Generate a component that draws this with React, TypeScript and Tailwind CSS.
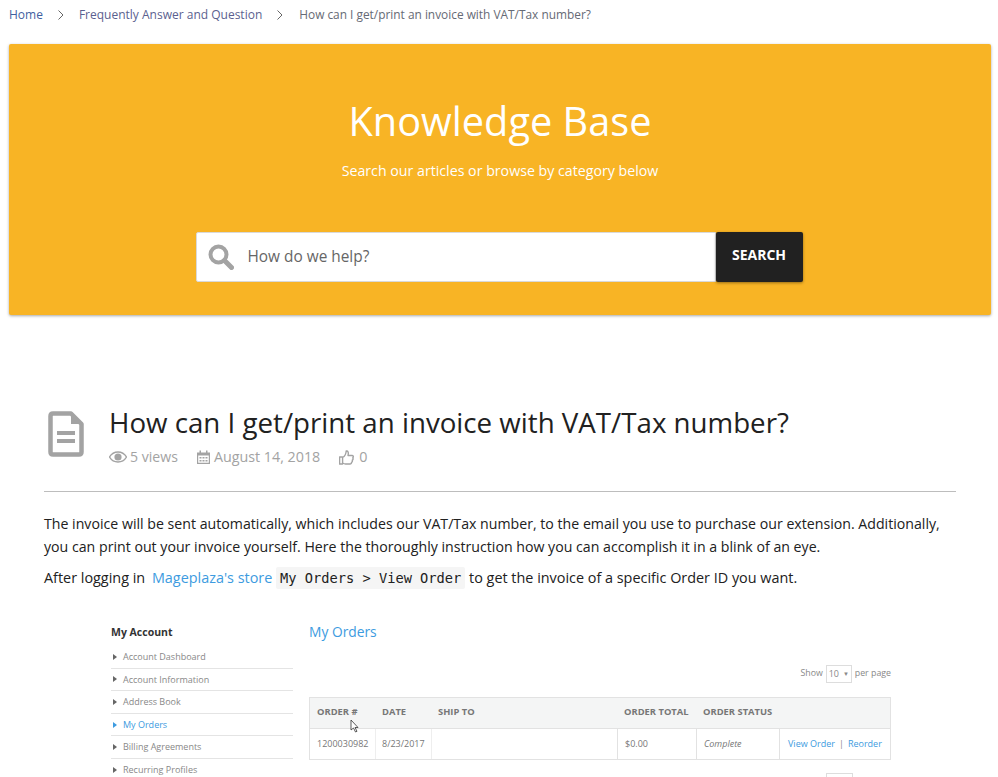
import React from "react";

const Caret = ({ color = "#666" }: { color?: string }) => (
  <svg width="4" height="6" viewBox="0 0 4 6" className="shrink-0"><path d="M0 0L4 3L0 6Z" fill={color} /></svg>
);

const side = ["Account Dashboard", "Account Information", "Address Book", "My Orders", "Billing Agreements", "Recurring Profiles"];

export default function App() {
  return (
    <div className="h-[777px] w-[998px] overflow-hidden bg-white font-['Open_Sans',sans-serif]">
      <nav className="flex h-[44px] items-start px-[9px] pt-[6px] text-[12px] leading-[17px] text-[#5b5f8f]">
        <span className="text-[#3f5f9f]">Home</span>
        <svg width="6" height="10" viewBox="0 0 6 10" className="ml-[15px] mr-[15px] mt-[4px]" fill="none" stroke="#666" strokeWidth="1"><path d="M0.5 0.5L5 5L0.5 9.5" /></svg>
        <span>Frequently Answer and Question</span>
        <svg width="6" height="10" viewBox="0 0 6 10" className="ml-[15px] mr-[16px] mt-[4px]" fill="none" stroke="#666" strokeWidth="1"><path d="M0.5 0.5L5 5L0.5 9.5" /></svg>
        <span className="text-[11.88px] text-[#666a75]">How can I get/print an invoice with VAT/Tax number?</span>
      </nav>

      <section className="ml-[9px] mr-[7px] flex h-[271px] flex-col items-center rounded-[2px] bg-[#f8b425] pt-[49px] shadow-[0_1px_3px_rgba(0,0,0,0.35)]">
        <h1 className="text-[39.7px] leading-[56px] text-white">Knowledge Base</h1>
        <p className="mt-[12px] text-[14.2px] leading-[20px] text-white">Search our articles or browse by category below</p>
        <div className="mr-[2px] mt-[51px] flex h-[50px] w-[607px]">
          <div className="flex flex-1 items-center rounded-l-[2px] border border-[#d9d9d9] bg-white">
            <svg width="26" height="26" viewBox="0 0 26 26" className="ml-[11px]" fill="none" stroke="#a3a3a3">
              <circle cx="10.5" cy="10.5" r="8" strokeWidth="4" />
              <path d="M16.5 16.5L23.5 23.5" strokeWidth="5" strokeLinecap="round" />
            </svg>
            <span className="ml-[14px] text-[15.4px] text-[#666]">How do we help?</span>
          </div>
          <div className="flex w-[87px] items-center justify-center rounded-[2px] bg-[#212121] pb-[5px] text-[14px] font-bold text-white shadow-[0_1px_3px_rgba(0,0,0,0.4)]">SEARCH</div>
        </div>
      </section>

      <article className="ml-[44px] mr-[42px] mt-[86px]">
        <header className="flex h-[91px] border-b border-[#bdbdbd]">
          <svg width="36" height="46" viewBox="0 0 36 46" className="ml-[4px] mt-[10px] shrink-0">
            <path d="M5 2.5H23L33.5 13V41C33.5 42.5 32.5 43.5 31 43.5H5C3.5 43.5 2.5 42.5 2.5 41V5C2.5 3.5 3.5 2.5 5 2.5Z" fill="none" stroke="#a3a3a3" strokeWidth="4.5" strokeLinejoin="round" />
            <path d="M23 2V13H34Z" fill="#a3a3a3" />
            <rect x="9" y="20" width="18" height="4" fill="#a3a3a3" />
            <rect x="9" y="28" width="18" height="4" fill="#a3a3a3" />
          </svg>
          <div className="ml-[25px] pt-[2px]">
            <h2 className="text-[27.7px] leading-[38px] text-[#212121]">How can I get/print an invoice with VAT/Tax number?</h2>
            <div className="mt-[6px] flex items-center text-[14.3px] leading-[20px] text-[#a3a3a3]">
              <svg width="18" height="12" viewBox="0 0 18 12" className="mr-[3px]">
                <path d="M9 1C5 1 2 3.5 0.5 6C2 8.5 5 11 9 11C13 11 16 8.5 17.5 6C16 3.5 13 1 9 1Z" fill="none" stroke="#a3a3a3" strokeWidth="1.4" />
                <circle cx="9" cy="6" r="3.6" fill="#a3a3a3" />
              </svg>
              <span className="text-[14.1px]">5 views</span>
              <svg width="13" height="14" viewBox="0 0 13 14" className="ml-[19px] mr-[4px]" fill="#a3a3a3">
                <path d="M0 2.5H13V14H0ZM1.2 5.5V12.8H11.8V5.5Z" fillRule="evenodd" />
                <rect x="2.5" y="0.5" width="1.5" height="3" /><rect x="9" y="0.5" width="1.5" height="3" />
                <rect x="2.5" y="7" width="2" height="1.5" /><rect x="5.5" y="7" width="2" height="1.5" /><rect x="8.5" y="7" width="2" height="1.5" />
                <rect x="2.5" y="10" width="2" height="1.5" /><rect x="5.5" y="10" width="2" height="1.5" /><rect x="8.5" y="10" width="2" height="1.5" />
              </svg>
              <span>August 14, 2018</span>
              <svg width="15" height="15" viewBox="0 0 15 15" className="ml-[19px] mr-[5px]" fill="none" stroke="#a3a3a3" strokeWidth="1.4">
                <path d="M0.6 7H3.6V14H0.6ZM3.6 7.5C5.5 6.5 7 4 7.2 1C9 0.5 9.8 2.5 9 5.5H13C14.5 5.5 14.6 7.2 13.8 7.8C14.4 8.8 14 9.8 13.3 10.2C13.6 11.2 13.2 12 12.5 12.3C12.6 13.4 12 14 11 14H6.5C5.5 14 4.5 13.5 3.6 13" strokeLinejoin="round" />
              </svg>
              <span>0</span>
            </div>
          </div>
        </header>

        <p className="mt-[20px] text-[14.16px] leading-[23px] text-[#212121]">
          The invoice will be sent automatically, which includes our VAT/Tax number, to the email you use to purchase our extension. Additionally, you can print out your invoice yourself. Here the thoroughly instruction how you can accomplish it in a blink of an eye.
        </p>
        <p className="mt-[8px] text-[14.4px] leading-[23px] text-[#212121]">
          After logging in <span className="ml-[3px] text-[#3d9be0]">Mageplaza's store</span>{" "}
          <code className="rounded-[2px] bg-[#f5f5f5] px-[4px] py-[3px] font-['DejaVu_Sans_Mono',monospace] text-[13.7px]">My Orders &gt; View Order</code>{" "}
          to get the invoice of a specific Order ID you want.
        </p>

        <div className="ml-[67px] mt-[35px] flex w-[780px] text-[#777]">
          <aside className="w-[182px] shrink-0">
            <div className="text-[10.5px] font-bold leading-[14px] text-[#333]">My Account</div>
            <ul className="mt-[7px]">
              {side.map((s) => (
                <li key={s} className="flex h-[22.6px] items-center gap-[6px] border-b border-[#e4e4e4] pl-[2px] text-[9px]">
                  <Caret color={s === "My Orders" ? "#3d9be0" : "#666"} />
                  <span className={s === "My Orders" ? "text-[#3d9be0]" : "text-[#888]"}>{s}</span>
                </li>
              ))}
            </ul>
          </aside>
          <div className="ml-[16px] flex-1">
            <div className="text-[13.8px] leading-[14px] text-[#3d9be0]">My Orders</div>
            <div className="mt-[26px] flex h-[18px] w-[582px] items-center justify-end text-[8.8px] text-[#888]">
              Show
              <span className="mx-[3px] flex h-[18px] w-[26px] items-center justify-center gap-[4px] border border-[#ddd] text-[9px]">10 <span className="text-[6px]">▼</span></span>
              per page
            </div>
            <div className="relative mt-[14px] w-[582px] border border-[#e2e2e2]">
              <div className="flex h-[30px] items-center bg-[#f4f5f5] pb-[1px] text-[9.4px] font-bold text-[#777]">
                <span className="w-[66px] pl-[7px]">ORDER #</span>
                <span className="w-[62px] pl-[6px]">DATE</span>
                <span className="w-[186px]">SHIP TO</span>
                <span className="w-[79px]">ORDER TOTAL</span>
                <span>ORDER STATUS</span>
              </div>
              <div className="flex h-[31px] items-center border-t border-[#e2e2e2] text-[9px] text-[#777]">
                <span className="flex h-full w-[66px] items-center border-r border-[#eee] pl-[7px]">1200030982</span>
                <span className="flex h-full w-[56px] items-center border-r border-[#eee] pl-[6px]">8/23/2017</span>
                <span className="h-full w-[186px] border-r border-[#e2e2e2]"></span>
                <span className="flex h-full w-[79px] items-center border-r border-[#e2e2e2] pl-[7px]">$0.00</span>
                <span className="flex h-full w-[83px] items-center border-r border-[#e2e2e2] pl-[7px] italic">Complete</span>
                <span className="flex items-center pl-[8px] text-[#3d9be0]">View Order<span className="mx-[4px] text-[#888]">|</span>Reorder</span>
              </div>
              <svg width="9" height="14" viewBox="0 0 9 14" className="absolute left-[40px] top-[21px]">
                <path d="M1 1V11L3.5 9L5.5 13L7 12.3L5 8.5H8Z" fill="#fff" stroke="#333" strokeWidth="0.8" />
              </svg>
            </div>
            <div className="ml-[517px] mt-[13px] h-[4px] w-[27px] border border-b-0 border-[#ddd]"></div>
          </div>
        </div>
      </article>
    </div>
  );
}
